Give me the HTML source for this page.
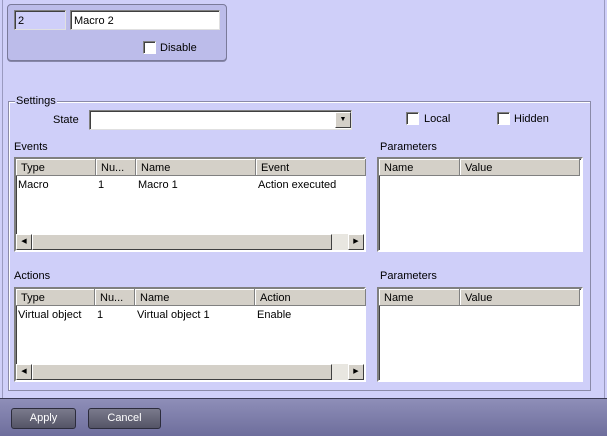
<!DOCTYPE html>
<html><head><style>
*{box-sizing:border-box;margin:0;padding:0}
body{width:607px;height:436px;background:#cfcff9;font-family:"Liberation Sans",sans-serif;font-size:11px;color:#000;position:relative;overflow:hidden}
.a{position:absolute}
.inp{position:absolute;background:#fff;border:1px solid #808080;border-right-color:#e0e0e0;border-bottom-color:#e0e0e0;box-shadow:inset 1px 1px 0 #404040;padding:3px 3px 1px;line-height:14px}
.cb{position:absolute;width:13px;height:13px;background:#fff;border:1px solid #808080;border-right-color:#fff;border-bottom-color:#fff;box-shadow:inset 1px 1px 0 #404040}
.tbl{position:absolute;background:#fff;border:2px solid;border-color:#808080 #fff #fff #808080;box-shadow:inset 1px 1px 0 #404040}
.hd{position:absolute;top:0;height:17px;background:#d4d0c8;border-right:1px solid #808080;border-bottom:1px solid #808080;box-shadow:inset 1px 1px 0 #fff;padding:3px 5px 1px;line-height:13px;white-space:nowrap;overflow:hidden}
.cell{position:absolute;top:19px;line-height:15px;padding-left:2px}
.sb{position:absolute;left:0;right:0;bottom:0;height:16px;background:#e8e6e0}
.btn{position:absolute;width:16px;height:16px;background:#d4d0c8;border:1px solid;border-color:#fff #404040 #404040 #fff;font-size:7px;text-align:center;line-height:14px}
.bb{position:absolute;width:65px;height:21px;border:1px solid #2c2c3c;border-radius:3px;background:linear-gradient(#7a7a8c,#545466);color:#fff;text-align:center;line-height:19px;font-size:11px}
.t{position:absolute;line-height:13px}
</style></head><body>
<div class="a" style="left:2px;top:0;width:1px;height:398px;background:#9a9ac0"></div>
<div class="a" style="left:604px;top:0;width:1px;height:398px;background:#9a9ac0"></div>
<div class="a" style="left:7px;top:4px;width:220px;height:57px;background:#bcbcea;border:1px solid #7a7a9a;border-radius:4px;box-shadow:0 1px 0 #8888aa"></div>
<div class="inp" style="left:14px;top:10px;width:52px;height:20px;background:#cfcff9">2</div>
<div class="inp" style="left:70px;top:10px;width:150px;height:20px">Macro 2</div>
<div class="cb" style="left:143px;top:41px"></div>
<div class="t" style="left:160px;top:42px">Disable</div>

<div class="a" style="left:8px;top:101px;width:583px;height:290px;border:1px solid #8a8aa8;box-shadow:1px 1px 0 #fff inset"></div>
<div class="t" style="left:15px;top:95px;background:#cfcff9;padding:0 1px">Settings</div>
<div class="t" style="left:53px;top:114px">State</div>
<div class="inp" style="left:89px;top:110px;width:263px;height:20px"></div>
<div class="btn" style="left:335px;top:112px;height:16px">▼</div>
<div class="cb" style="left:406px;top:112px"></div><div class="t" style="left:424px;top:113px">Local</div>
<div class="cb" style="left:497px;top:112px"></div><div class="t" style="left:514px;top:113px">Hidden</div>

<div class="t" style="left:14px;top:141px">Events</div>
<div class="tbl" style="left:14px;top:157px;width:352px;height:95px">
<div class="hd" style="left:0;width:80px">Type</div><div class="hd" style="left:80px;width:40px">Nu...</div><div class="hd" style="left:120px;width:120px">Name</div><div class="hd" style="left:240px;width:110px">Event</div>
<div class="cell" style="left:0">Macro</div><div class="cell" style="left:80px">1</div><div class="cell" style="left:120px">Macro 1</div><div class="cell" style="left:240px">Action executed</div>
<div class="sb"><div class="btn" style="left:0;top:0">◀</div><div class="a" style="left:16px;top:0;width:300px;height:16px;background:#d4d0c8;border:1px solid;border-color:#fff #404040 #404040 #fff"></div><div class="btn" style="right:0;top:0">▶</div></div>
</div>
<div class="t" style="left:380px;top:141px">Parameters</div>
<div class="tbl" style="left:377px;top:157px;width:206px;height:95px">
<div class="hd" style="left:0;width:81px">Name</div><div class="hd" style="left:81px;width:120px">Value</div>
</div>

<div class="t" style="left:14px;top:270px">Actions</div>
<div class="tbl" style="left:14px;top:287px;width:352px;height:95px">
<div class="hd" style="left:0;width:79px">Type</div><div class="hd" style="left:79px;width:40px">Nu...</div><div class="hd" style="left:119px;width:120px">Name</div><div class="hd" style="left:239px;width:111px">Action</div>
<div class="cell" style="left:0">Virtual object</div><div class="cell" style="left:79px">1</div><div class="cell" style="left:119px">Virtual object 1</div><div class="cell" style="left:239px">Enable</div>
<div class="sb"><div class="btn" style="left:0;top:0">◀</div><div class="a" style="left:16px;top:0;width:300px;height:16px;background:#d4d0c8;border:1px solid;border-color:#fff #404040 #404040 #fff"></div><div class="btn" style="right:0;top:0">▶</div></div>
</div>
<div class="t" style="left:380px;top:270px">Parameters</div>
<div class="tbl" style="left:377px;top:287px;width:206px;height:95px">
<div class="hd" style="left:0;width:81px">Name</div><div class="hd" style="left:81px;width:120px">Value</div>
</div>

<div class="a" style="left:0;top:398px;width:607px;height:38px;background:linear-gradient(#8e8eb8,#6e6e9c);border-top:1px solid #3a3a55"></div>
<div class="bb" style="left:11px;top:408px">Apply</div>
<div class="bb" style="left:88px;top:408px;width:73px">Cancel</div>
</body></html>
